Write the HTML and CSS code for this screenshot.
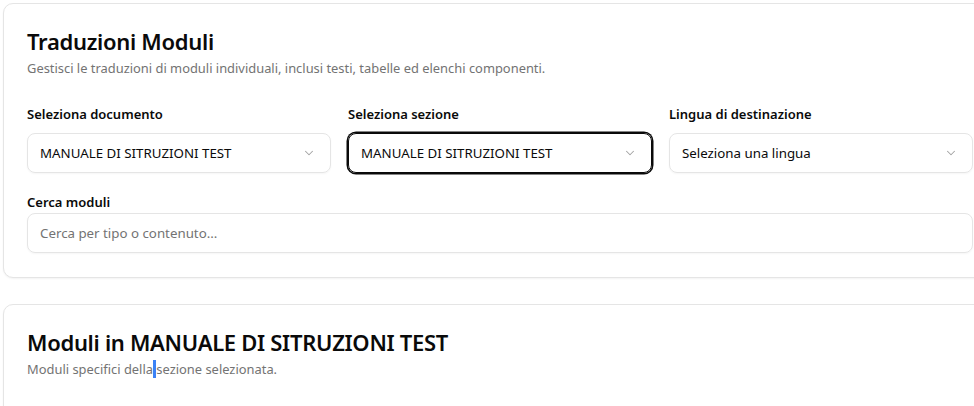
FILE: index.html
```html
<!DOCTYPE html>
<html lang="it">
<head>
<meta charset="utf-8">
<link rel="stylesheet" href="styles.css">
<title>Traduzioni Moduli</title>
</head>
<body>
<div class="page">
  <section class="card">
    <h1 class="card-title">Traduzioni Moduli</h1>
    <p class="card-desc">Gestisci le traduzioni di moduli individuali, inclusi testi, tabelle ed elenchi componenti.</p>
    <div class="grid">
      <div class="field">
        <label class="label">Seleziona documento</label>
        <div class="select">
          <span>MANUALE DI SITRUZIONI TEST</span>
          <svg class="chev" width="14" height="14" viewBox="0 0 24 24" fill="none" stroke="currentColor" stroke-width="1.8" stroke-linecap="round" stroke-linejoin="round"><path d="m6 9 6 6 6-6"/></svg>
        </div>
      </div>
      <div class="field">
        <label class="label">Seleziona sezione</label>
        <div class="select focused">
          <span>MANUALE DI SITRUZIONI TEST</span>
          <svg class="chev" width="14" height="14" viewBox="0 0 24 24" fill="none" stroke="currentColor" stroke-width="1.8" stroke-linecap="round" stroke-linejoin="round"><path d="m6 9 6 6 6-6"/></svg>
        </div>
      </div>
      <div class="field">
        <label class="label">Lingua di destinazione</label>
        <div class="select">
          <span>Seleziona una lingua</span>
          <svg class="chev" width="14" height="14" viewBox="0 0 24 24" fill="none" stroke="currentColor" stroke-width="1.8" stroke-linecap="round" stroke-linejoin="round"><path d="m6 9 6 6 6-6"/></svg>
        </div>
      </div>
    </div>
    <div class="field search">
      <label class="label">Cerca moduli</label>
      <div class="input"><span class="placeholder">Cerca per tipo o contenuto...</span></div>
    </div>
  </section>
  <section class="card second">
    <h2 class="card-title">Moduli in MANUALE DI SITRUZIONI TEST</h2>
    <p class="card-desc">Moduli specifici della<span class="sel"> </span>sezione selezionata.</p>
  </section>
</div>
</body>
</html>
```
FILE: styles.css
```css
html, body {
  margin: 0;
  padding: 0;
  overflow: hidden;
  background: #ffffff;
}
body {
  font-family: "Noto Sans", "Open Sans", sans-serif;
  color: #0a0a0a;
}
.page {
  width: 995px;
  padding: 3px 0 0 3px;
  display: flex;
  flex-direction: column;
  gap: 26px;
}
.card {
  border: 1px solid #e5e5e5;
  border-radius: 10px;
  box-shadow: 0 1px 2px rgba(0,0,0,0.05);
  padding: 22px 23px 24px 23px;
  background: #fff;
}
.second {
  min-height: 100px;
}
.card-title {
  margin: 0;
  font-size: 22px;
  font-weight: 600;
  line-height: 30px;
  letter-spacing: -0.3px;
}
.card-desc {
  margin: 3px 0 0;
  font-size: 12.9px;
  line-height: 18px;
  color: #737373;
}
.grid {
  margin-top: 29px;
  display: grid;
  grid-template-columns: repeat(3, 304px);
  gap: 17px;
}
.field {
  display: flex;
  flex-direction: column;
  gap: 11px;
}
.label {
  font-size: 13px;
  font-weight: 600;
  line-height: 16px;
}
.select, .input {
  box-sizing: border-box;
  height: 40px;
  border: 1px solid #e5e5e5;
  border-radius: 8px;
  display: flex;
  align-items: center;
  justify-content: space-between;
  padding: 0 14px 0 12px;
  font-size: 13.3px;
  box-shadow: 0 1px 2px rgba(0,0,0,0.04);
}
.select.focused {
  border-color: #0a0a0a;
  box-shadow: 0 0 0 1.5px #0a0a0a;
}
.chev {
  color: #a3a3a3;
}
.search {
  margin-top: 21px;
  width: 946px;
  gap: 3px;
}
.placeholder {
  color: #737373;
}
.sel {
  background: #3b82f6;
}
```
